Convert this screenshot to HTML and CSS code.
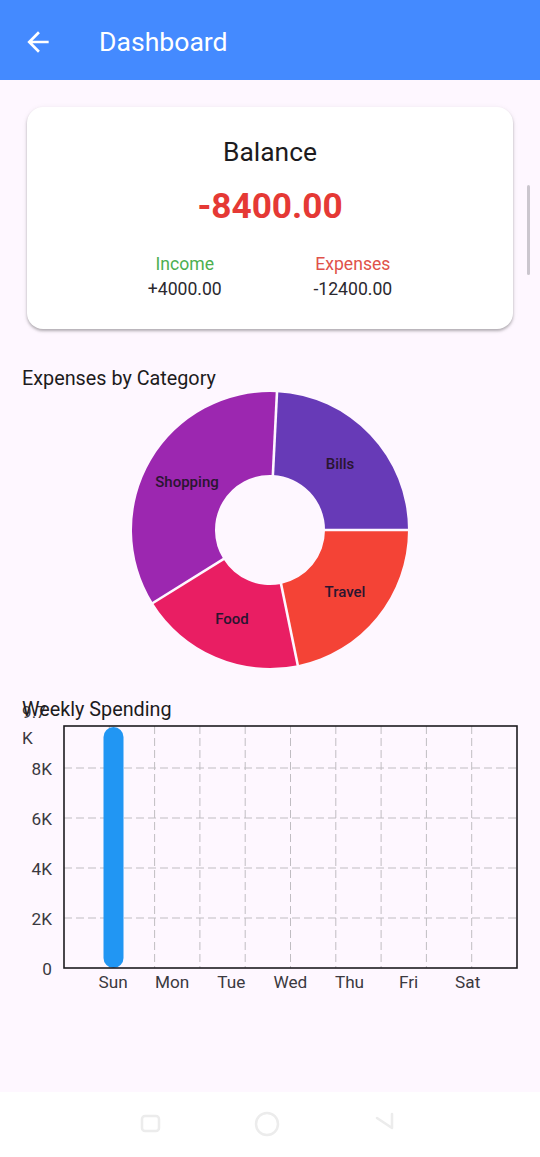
FILE: index.html
```html
<!DOCTYPE html>
<html lang="en">
<head>
<meta charset="utf-8">
<title>Dashboard</title>
<link rel="stylesheet" href="styles.css">
</head>
<body>
<div class="screen">
  <header class="appbar">
    <svg class="back" viewBox="0 0 24 24" width="32" height="32"><path d="M20 11H7.83l5.59-5.59L12 4l-8 8 8 8 1.41-1.41L7.83 13H20v-2z" fill="#fff"/></svg>
    <h1 class="appbar-title">Dashboard</h1>
  </header>

  <main class="content">
    <section class="card">
      <div class="card-label">Balance</div>
      <div class="card-amount">-8400.00</div>
      <div class="card-row">
        <div class="stat">
          <div class="stat-label income">Income</div>
          <div class="stat-value">+4000.00</div>
        </div>
        <div class="stat">
          <div class="stat-label expense">Expenses</div>
          <div class="stat-value">-12400.00</div>
        </div>
      </div>
    </section>

    <h2 class="section-title pie-title">Expenses by Category</h2>
    <svg class="pie" viewBox="21 390 498 290" width="498" height="290">
      <path d="M408,530 A138,138 0 0 1 297.77,665.18 L281.07,583.88 A55,55 0 0 0 325,530 Z" fill="#F44336"/>
      <path d="M297.77,665.18 A138,138 0 0 1 152.89,603 L223.33,559.10 A55,55 0 0 0 281.07,583.88 Z" fill="#E91E63"/>
      <path d="M152.89,603 A138,138 0 0 1 276.98,392.18 L272.78,475.07 A55,55 0 0 0 223.33,559.10 Z" fill="#9C27B0"/>
      <path d="M276.98,392.18 A138,138 0 0 1 408,530 L325,530 A55,55 0 0 0 272.78,475.07 Z" fill="#673AB7"/>
      <g class="gaps">
        <line x1="324" y1="530" x2="410" y2="530"/>
        <line x1="280.86" y1="582.9" x2="298.2" y2="667.2"/>
        <line x1="224.2" y1="558.6" x2="151.2" y2="604"/>
        <line x1="272.83" y1="476" x2="277.1" y2="390"/>
      </g>
      <g class="pie-labels">
        <text x="340" y="468.5">Bills</text>
        <text x="187" y="486.5">Shopping</text>
        <text x="345" y="596.5">Travel</text>
        <text x="232" y="623.5">Food</text>
      </g>
    </svg>

    <h2 class="section-title bar-title">Weekly Spending</h2>
    <svg class="bars" viewBox="21 722 498 280" width="498" height="280">
      <g class="grid">
        <line x1="64" y1="768" x2="517" y2="768"/>
        <line x1="64" y1="818" x2="517" y2="818"/>
        <line x1="64" y1="868" x2="517" y2="868"/>
        <line x1="64" y1="918" x2="517" y2="918"/>
        <line x1="109.3" y1="726" x2="109.3" y2="968"/>
        <line x1="154.6" y1="726" x2="154.6" y2="968"/>
        <line x1="199.9" y1="726" x2="199.9" y2="968"/>
        <line x1="245.2" y1="726" x2="245.2" y2="968"/>
        <line x1="290.5" y1="726" x2="290.5" y2="968"/>
        <line x1="335.8" y1="726" x2="335.8" y2="968"/>
        <line x1="381.1" y1="726" x2="381.1" y2="968"/>
        <line x1="426.4" y1="726" x2="426.4" y2="968"/>
        <line x1="471.7" y1="726" x2="471.7" y2="968"/>
      </g>
      <rect class="bar" x="103.5" y="727" width="20" height="241" rx="10"/>
      <rect class="frame" x="64" y="726" width="453" height="242"/>
      <g class="ylabels">
        <text x="52" y="975">0</text>
        <text x="52" y="925">2K</text>
        <text x="52" y="875">4K</text>
        <text x="52" y="825">6K</text>
        <text x="52" y="775">8K</text>
      </g>
      <g class="ytop">
        <text x="22" y="718">9.7</text>
        <text x="22" y="744">K</text>
      </g>
      <g class="xlabels">
        <text x="113.1" y="988">Sun</text>
        <text x="172.2" y="988">Mon</text>
        <text x="231.3" y="988">Tue</text>
        <text x="290.4" y="988">Wed</text>
        <text x="349.5" y="988">Thu</text>
        <text x="408.6" y="988">Fri</text>
        <text x="467.7" y="988">Sat</text>
      </g>
    </svg>
    <div class="scrollbar"></div>
  </main>

  <nav class="sysnav">
    <svg viewBox="0 0 540 65" width="540" height="65">
      <rect x="142" y="24" width="17" height="15" rx="3" class="navicon"/>
      <circle cx="267" cy="32" r="11" class="navicon"/>
      <path d="M377 26 L392 36 L392 22" class="navicon"/>
    </svg>
  </nav>
</div>
</body>
</html>
```

FILE: styles.css
```css
* { box-sizing: border-box; }
html, body { margin: 0; padding: 0; }
body {
  background: #FEF7FF;
  font-family: Roboto, "Noto Sans", "Liberation Sans", sans-serif;
  color: #1d1b20;
}
.screen {
  width: 540px;
  height: 1157px;
  display: flex;
  flex-direction: column;
  overflow: hidden;
}
.appbar {
  height: 80px;
  flex: none;
  background: #448AFF;
  display: flex;
  align-items: center;
  padding-left: 22px;
}
.back { display: block; margin-top: 4px; }
.appbar-title {
  margin: 4px 0 0 45px;
  font-size: 26.6px;
  font-weight: 400;
  color: #fff;
  line-height: 32px;
}
.content {
  flex: 1;
  position: relative;
  padding: 27px 21px 0;
}
.card {
  margin: 0 6px;
  height: 222px;
  background: #fff;
  border-radius: 16px;
  box-shadow: 0 2px 3px rgba(0,0,0,0.28), 0 1px 6px rgba(0,0,0,0.06);
  padding-top: 29px;
  text-align: center;
}
.card-label {
  font-size: 26.4px;
  line-height: 32px;
  color: #1d1b20;
}
.card-amount {
  margin-top: 17px;
  font-size: 35.2px;
  line-height: 42px;
  font-weight: 700;
  color: #E53935;
}
.card-row {
  margin-top: 26px;
  display: flex;
  justify-content: space-evenly;
  padding: 0 29px;
}
.stat-label {
  font-size: 17.6px;
  line-height: 22px;
}
.income { color: #4CAF50; }
.expense { color: #E0524A; }
.stat-value {
  margin-top: 3px;
  font-size: 17.6px;
  line-height: 22px;
  color: #2b292f;
}
.section-title {
  margin: 0 0 0 1px;
  font-size: 19.8px;
  font-weight: 400;
  line-height: 24px;
  color: #1d1b20;
}
.pie-title { margin-top: 38px; }
.pie, .bars { display: block; overflow: visible; }
.pie-title + .pie { margin-top: -1px; }
.gaps line { stroke: #FEF7FF; stroke-width: 2.6; }
.pie-labels text {
  font-size: 15px;
  font-weight: 500;
  fill: #2a1530;
  text-anchor: middle;
}
.bar-title { margin-top: 18px; position: relative; z-index: 1; }
.grid line {
  stroke: #c0bdc2;
  stroke-width: 1;
  stroke-dasharray: 8 4;
}
.bar { fill: #2196F3; }
.frame { fill: none; stroke: #1d1b20; stroke-width: 1.6; }
.ylabels text, .ytop text, .xlabels text {
  font-size: 17.2px;
  fill: #3b3940;
}
.ylabels text { text-anchor: end; }
.xlabels text { text-anchor: middle; }
.scrollbar {
  position: absolute;
  right: 10px;
  top: 105px;
  width: 3px;
  height: 90px;
  border-radius: 2px;
  background: #cbc6ce;
}
.sysnav {
  height: 65px;
  flex: none;
  background: #ffffff;
}
.sysnav svg { display: block; }
.navicon { fill: none; stroke: #ececec; stroke-width: 2.5; stroke-linecap: round; stroke-linejoin: round; }
```
